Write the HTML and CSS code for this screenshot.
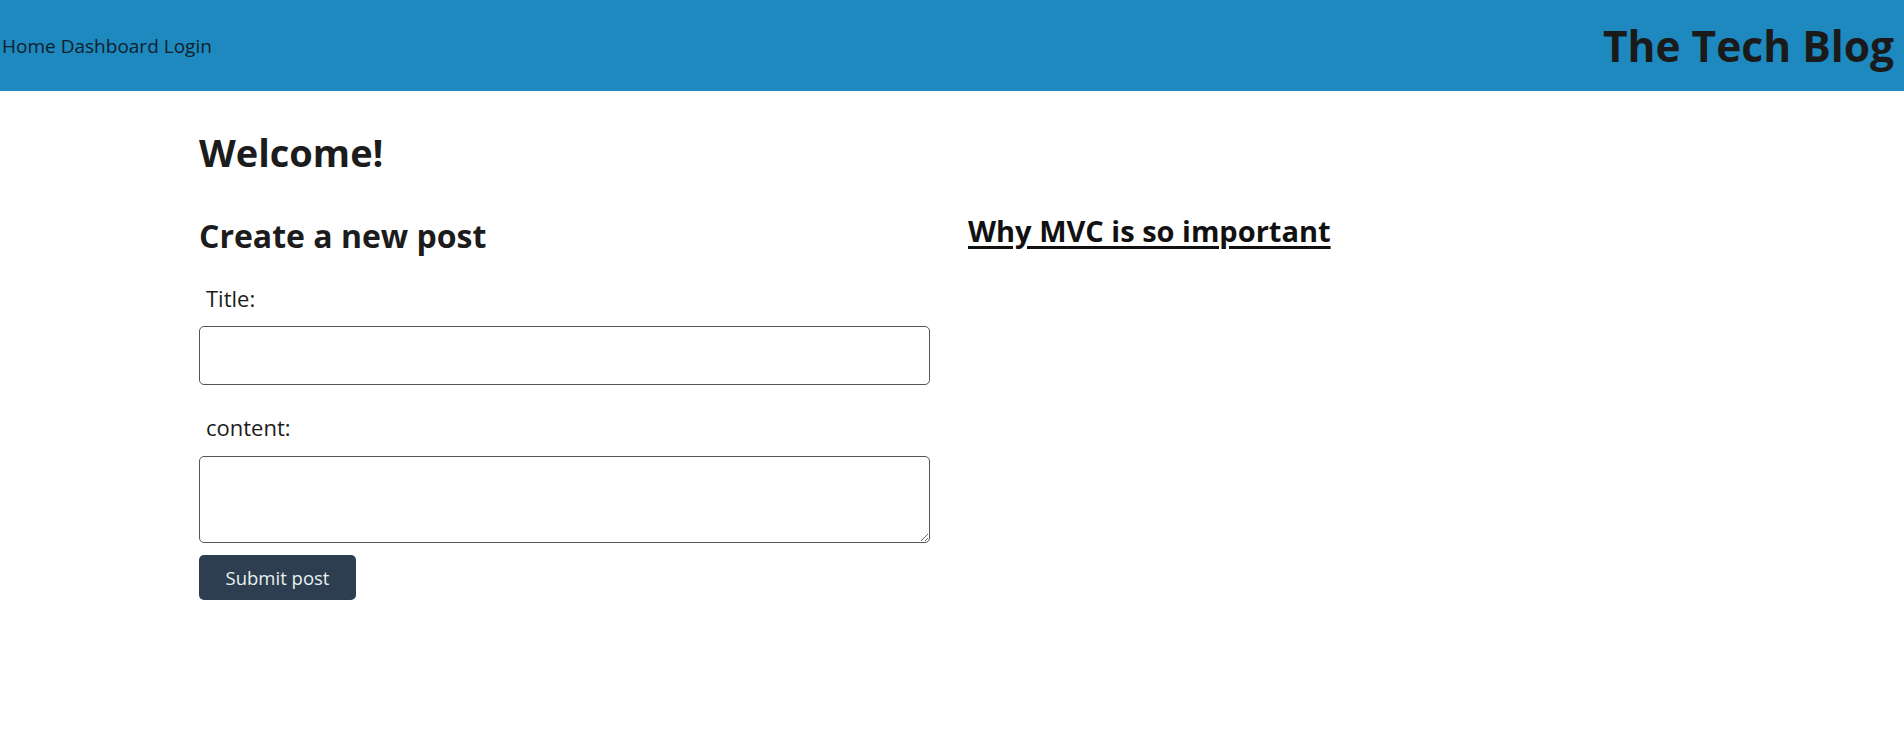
FILE: index.html
```html
<!DOCTYPE html>
<html lang="en">
<head>
<meta charset="utf-8">
<title>The Tech Blog</title>
<link rel="stylesheet" href="styles.css">
</head>
<body>
<header class="site-header">
  <nav class="nav">
    <a class="nav-link" href="#">Home</a>
    <a class="nav-link" href="#">Dashboard</a>
    <a class="nav-link" href="#">Login</a>
  </nav>
  <h1 class="brand">The Tech Blog</h1>
</header>
<main class="main">
  <h1 class="welcome">Welcome!</h1>
  <div class="columns">
    <section class="col-form">
      <h2 class="form-title">Create a new post</h2>
      <form class="post-form">
        <label class="field-label" for="title">Title:</label>
        <input class="field-input" id="title" type="text">
        <label class="field-label label-content" for="content">content:</label>
        <textarea class="field-textarea" id="content"></textarea>
        <button class="submit-btn" type="button">Submit post</button>
      </form>
    </section>
    <section class="col-posts">
      <h3 class="post-link"><a href="#">Why MVC is so important</a></h3>
    </section>
  </div>
</main>
</body>
</html>
```

FILE: styles.css
```css
html, body {
  margin: 0;
  padding: 0;
}
body {
  font-family: "Open Sans", "Noto Sans", sans-serif;
  color: #1c1c1c;
  background: #ffffff;
}
.site-header {
  display: flex;
  justify-content: space-between;
  align-items: center;
  height: 91px;
  background: #1d89be;
  padding: 0 10px 0 2px;
  box-sizing: border-box;
}
.nav {
  display: flex;
  gap: 5px;
  font-size: 19px;
}
.nav-link {
  color: #10202c;
  text-decoration: none;
}
.brand {
  margin: 0;
  font-size: 42.5px;
  font-weight: 700;
  color: #1a1a1a;
  line-height: 1.2;
}
.main {
  padding: 0 0 0 199px;
}
.welcome {
  margin: 37px 0 0 0;
  font-size: 38px;
  line-height: 48px;
  font-weight: 700;
}
.columns {
  display: flex;
  margin-top: 37px;
}
.col-form {
  width: 731px;
  flex: none;
}
.col-posts {
  margin-left: 38px;
}
.form-title {
  margin: 5px 0 0 0;
  font-size: 32px;
  line-height: 36px;
  font-weight: 700;
}
.post-form {
  display: flex;
  flex-direction: column;
  align-items: flex-start;
}
.field-label {
  margin: 30px 0 0 7px;
  font-size: 22px;
  line-height: 28px;
  color: #1c1c1c;
}
.label-content {
  margin-top: 28px;
}
.field-input {
  margin-top: 14px;
  width: 731px;
  height: 59px;
  box-sizing: border-box;
  border: 1px solid #555555;
  border-radius: 5px;
  font: inherit;
}
.field-textarea {
  margin-top: 15px;
  width: 731px;
  height: 87px;
  box-sizing: border-box;
  border: 1px solid #555555;
  border-radius: 5px;
  font: inherit;
}
.submit-btn {
  margin-top: 12px;
  width: 157px;
  height: 45px;
  border: none;
  border-radius: 5px;
  background: #2c3e50;
  color: #e8f0f2;
  font-family: inherit;
  font-size: 18.5px;
}
.post-link {
  margin: 0;
  font-size: 29px;
  line-height: 36px;
  font-weight: 700;
}
.post-link a {
  color: #111111;
  text-decoration: underline;
  text-decoration-thickness: 3px;
  text-underline-offset: 4px;
}
```
